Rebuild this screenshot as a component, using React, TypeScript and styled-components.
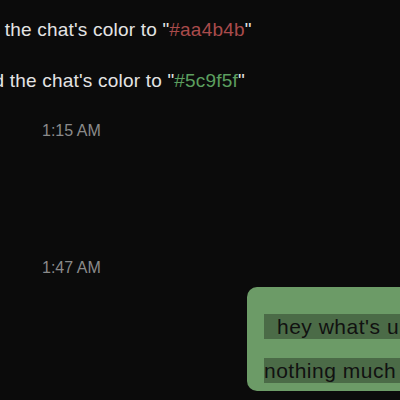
import * as React from "react";
import styled, { createGlobalStyle } from "styled-components";

const GlobalStyle = createGlobalStyle`
  html, body {
    margin: 0;
    padding: 0;
    background: #0b0b0b;
    overflow: hidden;
  }
  body {
    width: 400px;
    height: 400px;
    font-family: "Liberation Sans", Arial, sans-serif;
  }
`;

const Feed = styled.div`
  display: flex;
  flex-direction: column;
  padding-top: 18px;
  width: 400px;
`;

const SystemLine = styled.div<{ $offset: number; $gap?: number }>`
  margin-left: ${(p) => p.$offset}px;
  margin-bottom: ${(p) => p.$gap ?? 0}px;
  font-size: 19px;
  letter-spacing: 0.2px;
  line-height: 24px;
  color: #e4e4e4;
  white-space: nowrap;
`;

const Hex = styled.span<{ $color: string }>`
  color: ${(p) => p.$color};
`;

const Time = styled.div<{ $top: number }>`
  margin-top: ${(p) => p.$top}px;
  margin-left: 42px;
  font-size: 16px;
  line-height: 18px;
  color: #8a8a8a;
`;

const Card = styled.div`
  display: flex;
  flex-direction: column;
  gap: 19px;
  margin: 10px 0 0 247px;
  width: 190px;
  padding: 27px 0 8px 17px;
  background: #6c9b67;
  border-radius: 10px;
  box-sizing: border-box;
`;

const Bubble = styled.div<{ $indent?: number }>`
  background: #4b6b47;
  padding-left: ${(p) => p.$indent ?? 0}px;
  font-size: 21px;
  letter-spacing: 0.5px;
  line-height: 25px;
  color: #111;
  white-space: nowrap;
  overflow: hidden;
`;

export default function App() {
  return (
    <>
      <GlobalStyle />
      <Feed>
        <SystemLine $offset={-75} $gap={27}>
          changed the chat's color to "<Hex $color="#aa4b4b">#aa4b4b</Hex>"
        </SystemLine>
        <SystemLine $offset={-70}>
          changed the chat's color to "<Hex $color="#5c9f5f">#5c9f5f</Hex>"
        </SystemLine>
        <Time $top={29}>1:15 AM</Time>
        <Time $top={119}>1:47 AM</Time>
        <Card>
          <Bubble $indent={13}>hey what's up</Bubble>
          <Bubble>nothing much</Bubble>
        </Card>
      </Feed>
    </>
  );
}
